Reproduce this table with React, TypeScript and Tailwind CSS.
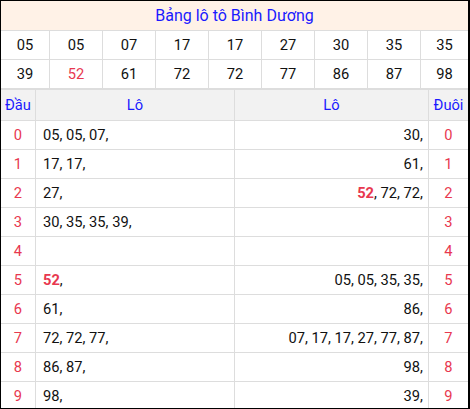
import React from "react";

const top1 = ["05", "05", "07", "17", "17", "27", "30", "35", "35"];
const top2 = ["39", "52", "61", "72", "72", "77", "86", "87", "98"];

type Part = { t: string; red?: boolean };
const left: Part[][] = [
  [{ t: "05, 05, 07," }],
  [{ t: "17, 17," }],
  [{ t: "27," }],
  [{ t: "30, 35, 35, 39," }],
  [],
  [{ t: "52", red: true }, { t: "," }],
  [{ t: "61," }],
  [{ t: "72, 72, 77," }],
  [{ t: "86, 87," }],
  [{ t: "98," }],
];
const right: Part[][] = [
  [{ t: "30," }],
  [{ t: "61," }],
  [{ t: "52", red: true }, { t: ", 72, 72," }],
  [],
  [],
  [{ t: "05, 05, 35, 35," }],
  [{ t: "86," }],
  [{ t: "07, 17, 17, 27, 77, 87," }],
  [{ t: "98," }],
  [{ t: "39," }],
];

function Parts({ p }: { p: Part[] }) {
  return (
    <>
      {p.map((x, i) =>
        x.red ? (
          <span key={i} className="font-bold text-[#e8384f]">
            {x.t}
          </span>
        ) : (
          <span key={i}>{x.t}</span>
        )
      )}
    </>
  );
}

export default function App() {
  return (
    <div
      className="w-[470px] h-[409px] overflow-hidden bg-white border-l border-t border-r-2 border-b border-black text-[14.7px] text-[#111]"
      style={{ fontFamily: "Roboto, 'Noto Sans', sans-serif" }}
    >
      <div className="h-[30px] bg-[#fff2e7] flex items-center justify-center text-[#1a1aff] text-[16px] border-b border-[#dddddd]">
        Bảng lô tô Bình Dương
      </div>
      <div className="grid grid-cols-[48px_repeat(7,1fr)_48px]">
        {top1.map((n, i) => (
          <div
            key={i}
            className={`h-[29px] flex items-center justify-center border-b border-[#dddddd] ${i > 0 ? "border-l" : ""}`}
          >
            {n}
          </div>
        ))}
        {top2.map((n, i) => (
          <div
            key={i}
            className={`h-[30px] flex items-center justify-center border-b-2 border-[#dddddd] ${i > 0 ? "border-l" : ""} ${n === "52" ? "text-[#e8384f]" : ""}`}
          >
            {n}
          </div>
        ))}
      </div>
      <div className="grid grid-cols-[34px_199px_194px_1fr]">
        <div className="h-[31px] bg-[#f2f2f2] flex items-center justify-center text-[#1a1aff] border-b border-[#dddddd]">
          Đầu
        </div>
        <div className="h-[31px] bg-[#f2f2f2] flex items-center justify-center text-[#1a1aff] border-b border-l border-[#dddddd]">
          Lô
        </div>
        <div className="h-[31px] bg-[#f2f2f2] flex items-center justify-center text-[#1a1aff] border-b border-l border-[#dddddd]">
          Lô
        </div>
        <div className="h-[31px] bg-[#f2f2f2] flex items-center justify-center text-[#1a1aff] border-b border-l border-[#dddddd]">
          Đuôi
        </div>
        {left.map((l, i) => (
          <React.Fragment key={i}>
            <div className="h-[29px] flex items-center justify-center text-[#e8384f] border-b border-[#dddddd]">
              {i}
            </div>
            <div className="h-[29px] flex items-center pl-[7px] border-b border-l border-[#dddddd] whitespace-nowrap">
              <Parts p={l} />
            </div>
            <div className="h-[29px] flex items-center justify-end pr-[5px] border-b border-l border-[#dddddd] whitespace-nowrap">
              <Parts p={right[i]} />
            </div>
            <div className="h-[29px] flex items-center justify-center text-[#e8384f] border-b border-l border-[#dddddd]">
              {i}
            </div>
          </React.Fragment>
        ))}
      </div>
    </div>
  );
}
